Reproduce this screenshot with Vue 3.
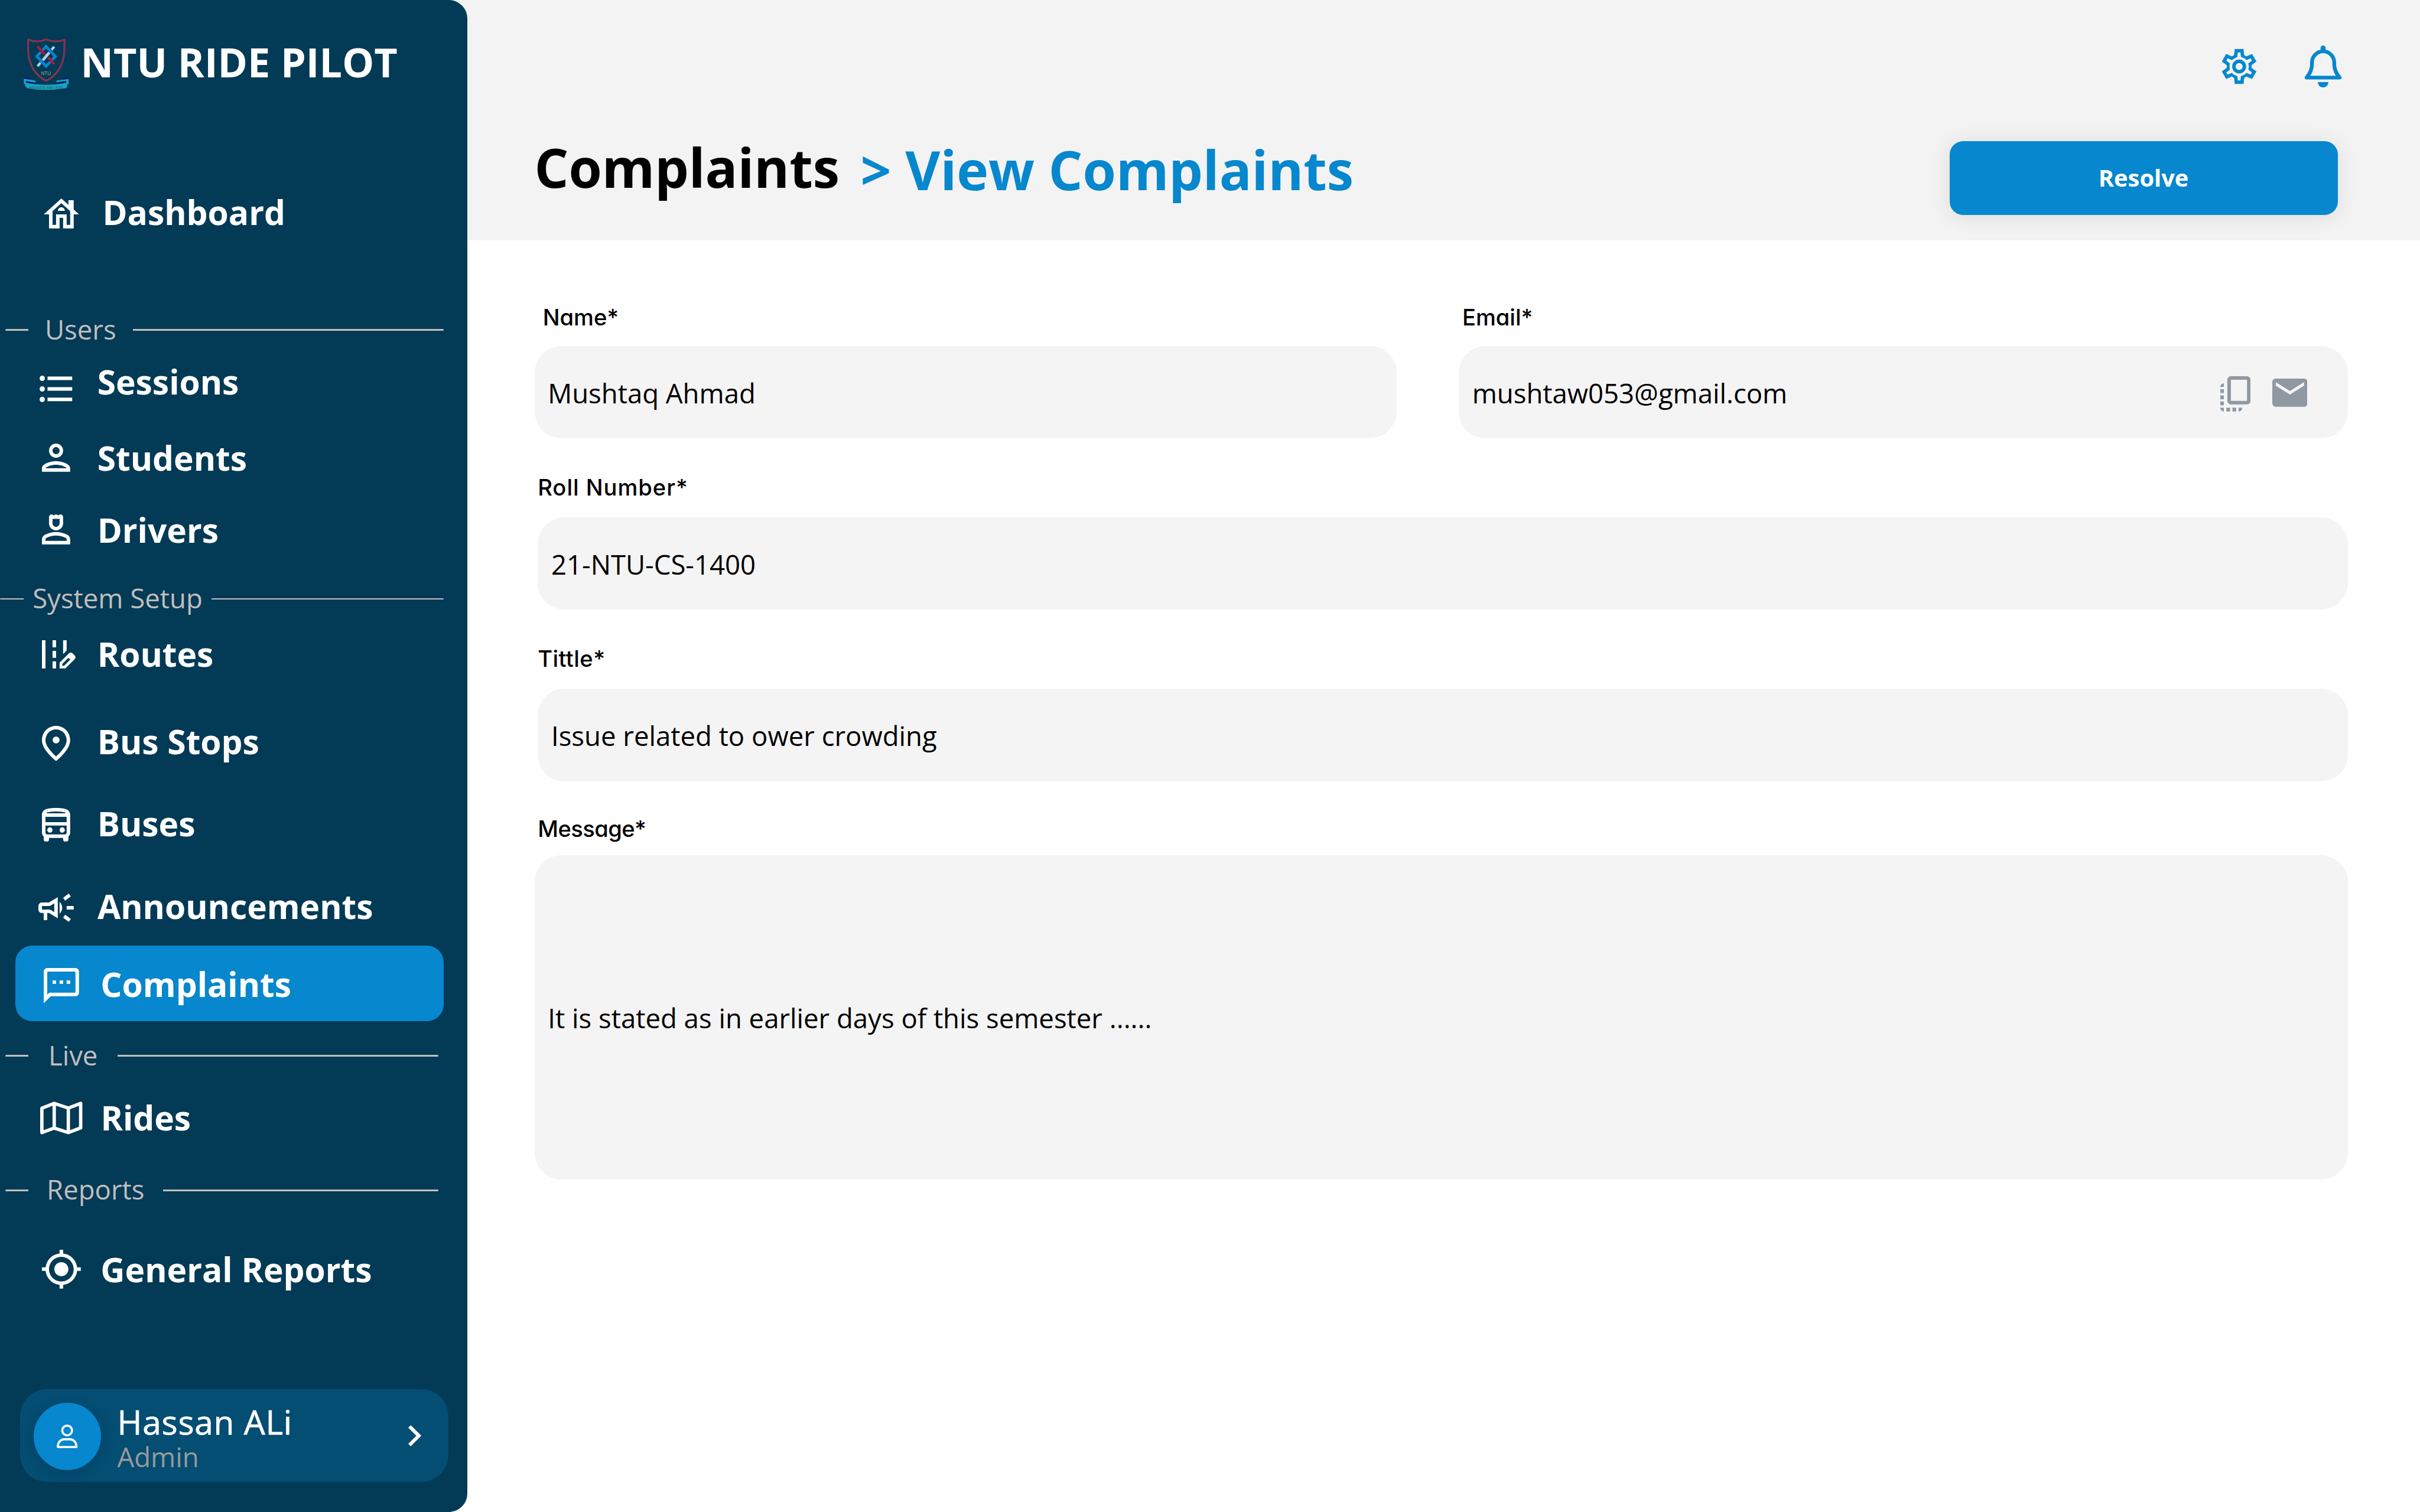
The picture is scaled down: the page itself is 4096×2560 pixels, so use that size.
<script setup>
const icons = {
  dashboard: {
    box: '2 3 20 17',
    d: 'M19 9.3V4h-3v2.6L12 3 2 12h3v8h6v-6h2v6h6v-8h3l-3-2.7zM17 18h-2v-6H9v6H7v-7.81l5-4.5 5 4.5V18zM10 10h4c0-1.1-.9-2-2-2s-2 .9-2 2z'
  },
  sessions: {
    box: '2.5 4.5 18.5 15',
    d: 'M4 10.5c-.83 0-1.5.67-1.5 1.5s.67 1.5 1.5 1.5 1.5-.67 1.5-1.5-.67-1.5-1.5-1.5zm0-6c-.83 0-1.5.67-1.5 1.5S3.17 7.5 4 7.5 5.5 6.83 5.5 6 4.83 4.5 4 4.5zm0 12c-.83 0-1.5.67-1.5 1.5s.67 1.5 1.5 1.5 1.5-.67 1.5-1.5-.67-1.5-1.5-1.5zM7 19h14v-2H7v2zm0-6h14v-2H7v2zm0-8v2h14V5H7z'
  },
  students: {
    box: '4 4 16 16',
    d: 'M12 6c1.1 0 2 .9 2 2s-.9 2-2 2-2-.9-2-2 .9-2 2-2m0 10c2.7 0 5.8 1.29 6 2H6c.23-.72 3.31-2 6-2m0-12C9.79 4 8 5.79 8 8s1.79 4 4 4 4-1.79 4-4-1.79-4-4-4zm0 10c-2.67 0-8 1.34-8 4v2h16v-2c0-2.66-5.33-4-8-4z'
  },
  drivers: {
    box: '4 3 16 17',
    d: 'M12 12c-2.21 0-4-1.79-4-4V4.5C8 3.67 8.67 3 9.5 3c.52 0 .98.27 1.25.67.27-.4.73-.67 1.25-.67s.98.27 1.25.67c.27-.4.73-.67 1.25-.67.83 0 1.5.67 1.5 1.5V8c0 2.21-1.79 4-4 4zM10 5.5V8c0 1.1.9 2 2 2s2-.9 2-2V5.5zM4 20v-2.8q0-.85.438-1.562T5.6 14.55q1.55-.775 3.15-1.162T12 13t3.25.388t3.15 1.162q.725.375 1.163 1.088T20 17.2V20zm2-2h12v-.8q0-.275-.137-.5t-.363-.35q-1.35-.675-2.725-1.012T12 15t-2.775.338T6.5 16.35q-.225.125-.363.35T6 17.2z'
  },
  routes: {
    box: '4 4 19 16',
    d: 'M18 4h-2v7.9l2-2zM4 4h2v16H4zm6 0h2v4h-2zm0 6h2v4h-2zm0 6h2v4h-2zm12.56-3.41-1.15-1.15c-.59-.59-1.54-.59-2.12 0L14 16.73V20h3.27l5.29-5.29c.59-.58.59-1.53 0-2.12zm-5.98 5.86h-1.03v-1.03L19 13.97 20.03 15l-3.45 3.45z'
  },
  stops: {
    box: '4 2 16 20',
    d: 'M12 2c4.2 0 8 3.22 8 8.2 0 3.32-2.67 7.25-8 11.8-5.33-4.55-8-8.48-8-11.8C4 5.22 7.8 2 12 2zm6 8.2c0-3.57-2.65-6.2-6-6.2s-6 2.63-6 6.2c0 2.34 1.95 5.44 6 9.14 4.05-3.7 6-6.79 6-9.14zM12 8a2 2 0 1 0 0 4 2 2 0 0 0 0-4z'
  },
  buses: {
    box: '4 2 16 19',
    d: 'M12 2c-4.42 0-8 .5-8 4v10c0 .88.39 1.67 1 2.22V20c0 .55.45 1 1 1h1c.55 0 1-.45 1-1v-1h8v1c0 .55.45 1 1 1h1c.55 0 1-.45 1-1v-1.78c.61-.55 1-1.34 1-2.22V6c0-3.5-3.58-4-8-4zm5.66 2.99H6.34C6.89 4.46 8.31 4 12 4s5.11.46 5.66.99zM18 10H6V7h12v3zm0 2v4c0 .37-.21.62-.34.73l-.29.27H6.63l-.29-.27C6.21 16.62 6 16.37 6 16v-4h12zM8.5 13a1.5 1.5 0 1 0 0 3 1.5 1.5 0 0 0 0-3zm7 0a1.5 1.5 0 1 0 0 3 1.5 1.5 0 0 0 0-3z'
  },
  announcements: {
    box: '2 4 20 16',
    d: 'M18 11v2h4v-2h-4zM16 17.61c.96.71 2.21 1.65 3.2 2.39.4-.53.8-1.07 1.2-1.6-.99-.74-2.24-1.68-3.2-2.4-.4.54-.8 1.08-1.2 1.61zM20.4 5.6c-.4-.53-.8-1.07-1.2-1.6-.99.74-2.24 1.68-3.2 2.4.4.53.8 1.07 1.2 1.6.96-.72 2.21-1.65 3.2-2.4zM4 9c-1.1 0-2 .9-2 2v2c0 1.1.9 2 2 2h1v4h2v-4h1l5 3V6L8 9H4zm5.03 1.71L11 9.53v4.94l-1.97-1.18-.48-.29H4v-2h4.55l.48-.29zM15.5 12c0-1.33-.58-2.53-1.5-3.35v6.69c.92-.81 1.5-2.01 1.5-3.34z'
  },
  complaints: {
    box: '2 2 20 20',
    d: 'M20 2H4c-1.1 0-2 .9-2 2v18l4-4h14c1.1 0 2-.9 2-2V4c0-1.1-.9-2-2-2zm0 14H5.17L4 17.17V4h16v12zM7 9h2v2H7zm4 0h2v2h-2zm4 0h2v2h-2z'
  },
  rides: {
    box: '0 0 25.1 19.6',
    stroke: 'M1 4 8.35 1.1 16.75 3.9 24.1 1.1V15.7L16.75 18.5 8.35 15.8 1 18.5zM8.35 1.1V15.8M16.75 3.9V18.5'
  },
  reports: {
    box: '1 1 22 22',
    d: 'M12 8c-2.21 0-4 1.79-4 4s1.79 4 4 4 4-1.79 4-4-1.79-4-4-4zm8.94 3c-.46-4.17-3.77-7.48-7.94-7.94V1h-2v2.06C6.83 3.52 3.52 6.83 3.06 11H1v2h2.06c.46 4.17 3.77 7.48 7.94 7.94V23h2v-2.06c4.17-.46 7.48-3.77 7.94-7.94H23v-2h-2.06zM12 19c-3.87 0-7-3.13-7-7s3.13-7 7-7 7 3.13 7 7-3.13 7-7 7z'
  }
}

const nav = [
  { id: 'dashboard', label: 'Dashboard' },
  { id: 'users', label: 'Users', section: true },
  { id: 'sessions', label: 'Sessions' },
  { id: 'students', label: 'Students' },
  { id: 'drivers', label: 'Drivers' },
  { id: 'system', label: 'System Setup', section: true },
  { id: 'routes', label: 'Routes' },
  { id: 'stops', label: 'Bus Stops' },
  { id: 'buses', label: 'Buses' },
  { id: 'announcements', label: 'Announcements' },
  { id: 'complaints', label: 'Complaints', active: true },
  { id: 'live', label: 'Live', section: true },
  { id: 'rides', label: 'Rides' },
  { id: 'report-section', label: 'Reports', section: true },
  { id: 'reports', label: 'General Reports' }
]

// Gear outline: one tooth repeated six times around the centre.
function ring(points, arc) {
  let d = ''
  for (let i = 0; i < 6; i++) {
    const a = (i * Math.PI) / 3
    points.forEach(([x, y], j) => {
      const px = (x * Math.cos(a) - y * Math.sin(a)).toFixed(2)
      const py = (x * Math.sin(a) + y * Math.cos(a)).toFixed(2)
      const cmd = i + j === 0 ? 'M' : j === 0 && arc ? `A${arc} ${arc} 0 0 1 ` : 'L'
      d += `${cmd}${px} ${py}`
    })
  }
  return d + 'Z'
}
const gear =
  ring([[-35, -80.5], [-30, -123.5], [30, -123.5], [35, -80.5]]) +
  ring([[-14.5, -69], [-10.5, -101.5], [10.5, -101.5], [14.5, -69]], 70)
</script>

<template>
  <div class="app">
    <aside class="sidebar">
      <div class="brand">
        <svg class="logo" viewBox="0 0 420 450">
          <g fill="none" stroke-linejoin="round">
            <path d="M82 42Q150 70 211 40Q274 70 343 42L341 130C336 220 290 300 211 337C134 300 88 220 84 130Z" stroke="#8f97a8" stroke-width="12" opacity=".55" />
            <path d="M82 42Q150 70 211 40Q274 70 343 42L341 130C336 220 290 300 211 337C134 300 88 220 84 130Z" stroke="#ad1d3d" stroke-width="9" />
          </g>
          <path d="M269 93 150 233" stroke="#afcff3" stroke-width="18" />
          <path d="M211 91 277 162 211 233 145 162Z" fill="none" stroke="#023a55" stroke-width="25" />
          <path d="M211 91 277 162 211 233 145 162Z" fill="none" stroke="#0b84cb" stroke-width="20" />
          <path d="M231 138 191 186" stroke="#afcff3" stroke-width="19" />
          <path d="M149 92 202 149M225 170 271 220" stroke="#023a55" stroke-width="22" />
          <path d="M149 91 202 148M226 170 270 218" stroke="#ad1d3d" stroke-width="18" />
          <text x="210" y="295" text-anchor="middle" textLength="70" lengthAdjust="spacingAndGlyphs" font-size="42" fill="#aba385">NTU</text>
          <path d="M52 311 91 313V329L55 326ZM333 313 372 314 369 330 333 327Z" fill="#20137c" />
          <path d="M52 322 135 335V358L82 352 80 384 64 380 60 360 52 357ZM372 324 285 335V348L345 352 350 386 362 380 362 361 372 362Z" fill="#16a5c0" />
          <path d="M66 338 138 350V360L70 352ZM356 338 285 348V359L354 352Z" fill="#20137c" />
          <path d="M70 352Q211 378 352 352L358 388Q211 416 74 389Z" fill="#16a5c0" />
          <text x="211" y="395" text-anchor="middle" textLength="240" lengthAdjust="spacingAndGlyphs" font-size="30" fill="#37525f">INNOVATE AND LEAD</text>
        </svg>
        <span class="brand-name">NTU RIDE PILOT</span>
      </div>

      <nav class="nav">
        <template v-for="item in nav" :key="item.id">
          <div v-if="item.section" class="section" :class="`section--${item.id}`">
            <i class="rule rule--short"></i>
            <span class="section-label">{{ item.label }}</span>
            <i class="rule rule--long"></i>
          </div>
          <a v-else class="item" :class="[`item--${item.id}`, { 'item--active': item.active }]">
            <span class="slot">
              <svg class="icon" :viewBox="icons[item.id].box">
                <path v-if="icons[item.id].d" :d="icons[item.id].d" fill="#fff" fill-rule="evenodd" />
                <path v-else :d="icons[item.id].stroke" fill="none" stroke="#fff" stroke-width="2" stroke-linejoin="round" />
              </svg>
            </span>
            <span class="item-label">{{ item.label }}</span>
          </a>
        </template>
      </nav>

      <div class="user">
        <div class="avatar">
          <svg viewBox="0 0 12.4 14" fill="none" stroke="#fff" stroke-width="1.25" stroke-linejoin="round">
            <circle cx="6.2" cy="3.5" r="2.9" />
            <path d="M.65 13.35H11.75C11.75 10.4 10 8.75 7.8 8.75H4.6C2.4 8.75.65 10.4.65 13.35Z" />
          </svg>
        </div>
        <div class="who">
          <span class="user-name">Hassan ALi</span>
          <span class="role">Admin</span>
        </div>
        <svg class="chevron" viewBox="8.59 6 7.41 12"><path d="M10 6 8.59 7.41 13.17 12l-4.58 4.59L10 18l6-6z" fill="#fff" /></svg>
      </div>
    </aside>

    <main class="main">
      <header class="header">
        <div class="tools">
          <svg class="gear" viewBox="-126 -129 252 258">
            <path :d="gear" fill="#0787cd" fill-rule="evenodd" stroke="#0787cd" stroke-width="3" stroke-linejoin="round" />
            <circle r="37.5" fill="none" stroke="#0787cd" stroke-width="25" />
          </svg>
          <svg class="bell" viewBox="645 50 270 308">
            <path d="M762 100V72a18 18 0 0 1 36 0v28z" fill="#0787cd" />
            <path d="M662 283.5C690 250 700.5 218 700.5 190V175.5a79.5 79.5 0 0 1 159 0V190C859.5 218 870 250 898 283.5Z" fill="none" stroke="#0787cd" stroke-width="27" stroke-linejoin="round" />
            <path d="M742 316H818A38 38 0 0 1 742 316Z" fill="#0787cd" />
          </svg>
        </div>
        <div class="heading">
          <h1 class="crumb">Complaints</h1>
          <h2 class="crumb crumb--current">&gt; View Complaints</h2>
          <button class="resolve">Resolve</button>
        </div>
      </header>

      <form class="form">
        <div class="columns">
          <div class="group group--name">
            <label>Name*</label>
            <div class="field">Mushtaq Ahmad</div>
          </div>
          <div class="group group--email">
            <label>Email*</label>
            <div class="field">
              <span>mushtaw053@gmail.com</span>
              <svg class="copy" viewBox="0 0 18 21" fill="#9098a2">
                <path fill-rule="evenodd" d="M6.3 0H15.9A2.1 2.1 0 0 1 18 2.1V14.7A2.1 2.1 0 0 1 15.9 16.8H6.3A2.1 2.1 0 0 1 4.2 14.7V2.1A2.1 2.1 0 0 1 6.3 0ZM6.3 2.1V14.7H15.9V2.1Z" />
                <path d="M0 6.3A2.1 2.1 0 0 1 2.1 4.2V6.3ZM0 7.7H2.1V10H0ZM0 11.4H2.1V13.7H0ZM0 15.05H2.1V17.3H0ZM0 18.7H2.1V21A2.2 2.2 0 0 1 0 18.7ZM3.6 18.7H5.85V21H3.6ZM7.25 18.7H9.45V21H7.25ZM10.9 18.7H13.1A2.2 2.2 0 0 1 10.9 21Z" />
              </svg>
              <svg class="mail" viewBox="2 4 20 16" fill="#9098a2">
                <path d="M20 4H4c-1.1 0-1.99.9-1.99 2L2 18c0 1.1.9 2 2 2h16c1.1 0 2-.9 2-2V6c0-1.1-.9-2-2-2zm0 4-8 5-8-5V6l8 5 8-5v2z" />
              </svg>
            </div>
          </div>
        </div>
        <div class="group group--roll">
          <label>Roll Number*</label>
          <div class="field">21-NTU-CS-1400</div>
        </div>
        <div class="group group--title">
          <label>Tittle*</label>
          <div class="field">Issue related to ower crowding</div>
        </div>
        <div class="group group--message">
          <label>Message*</label>
          <div class="field">It is stated as in earlier days of this semester ......</div>
        </div>
      </form>
    </main>
  </div>
</template>

<style>
html {
  font-size: calc(100vw / 144);
}
body {
  margin: 0;
}
</style>

<style scoped>
* {
  box-sizing: border-box;
}
svg {
  display: block;
  flex: none;
}
.app {
  display: flex;
  width: 144rem;
  height: 90rem;
  overflow: hidden;
  font-family: 'Open Sans', 'Noto Sans', sans-serif;
  background: linear-gradient(#f3f3f3 14.3rem, #fff 14.3rem);
}

/* Sidebar */
.sidebar {
  flex: none;
  display: flex;
  flex-direction: column;
  width: 27.8rem;
  height: 90rem;
  border-radius: 0 1.1rem 1.1rem 0;
  background: #033a55;
  color: #fff;
}
.brand {
  display: flex;
  height: 11.11rem;
  padding: 2rem 0 0 1rem;
}
.logo {
  width: 3.5rem;
  height: 3.75rem;
  font-family: 'Liberation Sans', sans-serif;
}
.brand-name {
  margin: 0.18rem 0 0 0.3rem;
  font-size: 2.4rem;
  font-weight: 700;
  line-height: 3rem;
  white-space: nowrap;
}
.nav {
  display: flex;
  flex-direction: column;
}
.item {
  display: flex;
  align-items: center;
  height: 3rem;
  font-size: 2rem;
  font-weight: 700;
  line-height: 3rem;
  white-space: nowrap;
}
.slot {
  flex: none;
}
.item-label {
  padding: 0.08rem 0 0 0.03rem;
}
.item--complaints .item-label,
.item--rides .item-label,
.item--reports .item-label {
  padding-left: 0.01rem;
}
.item--dashboard { padding-left: 2.6rem; }
.item--dashboard .slot { width: 3.47rem; padding-top: 0.18rem; }
.item--dashboard .icon { width: 2.1rem; height: 1.785rem; }
.item--sessions { margin-top: 0.55rem; padding-left: 2.365rem; }
.item--sessions .slot { width: 3.395rem; padding-top: 0.9rem; }
.item--sessions .icon { width: 1.943rem; height: 1.575rem; }
.item--students { margin-top: 1.52rem; padding-left: 2.5rem; }
.item--students .slot { width: 3.26rem; padding-top: 0.06rem; }
.item--students .icon { width: 1.68rem; height: 1.68rem; }
.item--drivers { margin-top: 1.29rem; padding-left: 2.5rem; }
.item--drivers .slot { width: 3.26rem; }
.item--drivers .icon { width: 1.68rem; height: 1.785rem; }
.item--routes { margin-top: 0.76rem; padding-left: 2.5rem; }
.item--routes .slot { width: 3.26rem; padding-top: 0.1rem; }
.item--routes .icon { width: 1.995rem; height: 1.68rem; }
.item--stops { margin-top: 2.2rem; padding-left: 2.5rem; }
.item--stops .slot { width: 3.26rem; padding-top: 0.28rem; }
.item--stops .icon { width: 1.68rem; height: 2.1rem; }
.item--buses { margin-top: 1.9rem; padding-left: 2.5rem; }
.item--buses .slot { width: 3.26rem; padding-top: 0.18rem; }
.item--buses .icon { width: 1.68rem; height: 1.995rem; }
.item--announcements { margin-top: 1.92rem; padding-left: 2.29rem; }
.item--announcements .slot { width: 3.48rem; padding-top: 0.24rem; }
.item--announcements .icon { width: 2.1rem; height: 1.68rem; }
.item--complaints { margin-top: 0.87rem; padding-left: 1.7rem; }
.item--complaints .slot { width: 3.38rem; padding-top: 0.22rem; }
.item--complaints .icon { width: 2.1rem; height: 2.1rem; }
.item--rides { margin-top: 1.15rem; padding-left: 2.4rem; }
.item--rides .slot { width: 3.58rem; padding-top: 0.1rem; }
.item--rides .icon { width: 2.51rem; height: 1.96rem; }
.item--reports { margin-top: 2.18rem; padding-left: 2.49rem; }
.item--reports .slot { width: 3.49rem; padding-top: 0.04rem; }
.item--reports .icon { width: 2.31rem; height: 2.31rem; }
.item--active {
  width: 25.5rem;
  height: 4.5rem;
  margin-left: 0.9rem;
  border-radius: 1rem;
  background: #0787cd;
}

.section {
  display: flex;
  align-items: center;
  width: 26.1rem;
  height: 2rem;
  padding-left: 0.3rem;
}
.rule {
  height: 0.1rem;
  background: #c3c0c0;
}
.rule--short {
  flex: none;
  width: 1.4rem;
  border-radius: 0.1rem 0 0 0.1rem;
}
.rule--long {
  flex: 1;
  border-radius: 0 0.1rem 0.1rem 0;
}
.section-label {
  flex: none;
  padding-bottom: 0.09rem;
  color: #c0bebe;
  font-size: 1.6rem;
  line-height: 2rem;
  white-space: nowrap;
}
.section--users { width: 26.4rem; margin-top: 4.54rem; }
.section--users .section-label { width: 6.2rem; padding-left: 0.97rem; }
.section--system { width: 26.4rem; margin-top: 1.64rem; padding-left: 0; }
.section--system .section-label { width: 11.2rem; padding-left: 0.54rem; }
.section--live { margin-top: 1.05rem; }
.section--live .section-label { width: 5.3rem; padding-left: 1.18rem; }
.section--report-section { margin-top: 1.85rem; }
.section--report-section .section-label { width: 8rem; padding-left: 1.08rem; }

.user {
  display: flex;
  align-items: center;
  width: 25.5rem;
  height: 5.5rem;
  margin: auto 0 1.8rem 1.2rem;
  padding: 0 1.64rem 0 0.8rem;
  border-radius: 1.6rem;
  background: #044d73;
}
.avatar {
  flex: none;
  display: flex;
  align-items: center;
  justify-content: center;
  width: 4rem;
  height: 4rem;
  margin-top: 0.1rem;
  border-radius: 50%;
  background: #0787cd;
  box-shadow: 0 0.2rem 1rem rgba(0, 0, 0, 0.12);
}
.avatar svg {
  width: 1.24rem;
  height: 1.4rem;
}
.who {
  display: flex;
  flex-direction: column;
  margin-left: 0.98rem;
  padding-top: 0.32rem;
  white-space: nowrap;
}
.user-name {
  font-size: 2rem;
  letter-spacing: 0.026rem;
  line-height: 2.2rem;
  -webkit-text-stroke: 0.025rem #fff;
}
.role {
  color: #999;
  font-size: 1.6rem;
  line-height: 1.98rem;
}
.chevron {
  width: 0.78rem;
  height: 1.26rem;
  margin-left: auto;
}

/* Header */
.main {
  flex: 1;
  min-width: 0;
}
.header {
  height: 14.3rem;
}
.tools {
  display: flex;
  align-items: flex-start;
  justify-content: flex-end;
  gap: 2.825rem;
  height: 8.4rem;
  padding: 2.667rem 4.625rem 0 0;
}
.gear {
  width: 2.1rem;
  height: 2.15rem;
  margin-top: 0.208rem;
}
.bell {
  width: 2.25rem;
  height: 2.567rem;
}
.heading {
  display: flex;
  height: 4.4rem;
  padding: 0 4.9rem 0 4rem;
}
.crumb {
  flex: none;
  width: 19.41rem;
  margin: -0.62rem 0 0;
  color: #000;
  font-size: 3.2rem;
  font-weight: 700;
  line-height: 4.4rem;
  white-space: nowrap;
}
.crumb--current {
  width: auto;
  margin-top: -0.5rem;
  color: #0787cd;
}
.resolve {
  width: 23.1rem;
  height: 4.4rem;
  margin-left: auto;
  padding: 0 0 0.1rem;
  border: 0;
  border-radius: 0.8rem;
  background: #0787cd;
  box-shadow: 0 0.1rem 1.2rem rgba(0, 0, 0, 0.1);
  color: #fff;
  font-family: inherit;
  font-size: 1.4rem;
  font-weight: 700;
}

/* Form */
.form {
  display: flex;
  flex-direction: column;
  padding: 3.61rem 4.3rem 0 4rem;
}
.columns {
  display: grid;
  grid-template-columns: 51.3rem 52.9rem;
  gap: 3.7rem;
}
.group {
  display: flex;
  flex-direction: column;
}
label {
  height: 2rem;
  margin-bottom: 0.8rem;
  padding-top: 0.03rem;
  color: #000;
  font-family: Inter, 'Open Sans', sans-serif;
  font-size: 1.34rem;
  font-weight: 450;
  font-feature-settings: 'cv11';
  line-height: 2rem;
  white-space: nowrap;
}
.field {
  display: flex;
  align-items: center;
  height: 5.5rem;
  padding: 0.06rem 0 0 0.8rem;
  border-radius: 1.6rem;
  background: #f4f4f4;
  color: #000;
  font-size: 1.6rem;
  line-height: 2.2rem;
  white-space: nowrap;
}
.group--name label { margin: 0 0 0.69rem 0.5rem; padding-top: 0; }
.group--email label { margin: 0 0 0.69rem 0.21rem; padding-top: 0; }
.group--email .field { padding-right: 2.4rem; }
.group--roll { margin: 1.89rem 0 0 0.2rem; }
.group--roll label { margin-bottom: 0.81rem; letter-spacing: 0.035rem; }
.group--title { margin: 1.9rem 0 0 0.2rem; }
.group--title label { letter-spacing: 0.015rem; }
.group--message { margin-top: 1.82rem; }
.group--message label { margin: 0 0 0.58rem 0.2rem; letter-spacing: -0.02rem; }
.group--message .field { height: 19.3rem; }
.copy {
  width: 1.8rem;
  height: 2.1rem;
  margin: 0.15rem 1.3rem 0 auto;
}
.mail {
  width: 2.1rem;
  height: 1.68rem;
}
</style>
